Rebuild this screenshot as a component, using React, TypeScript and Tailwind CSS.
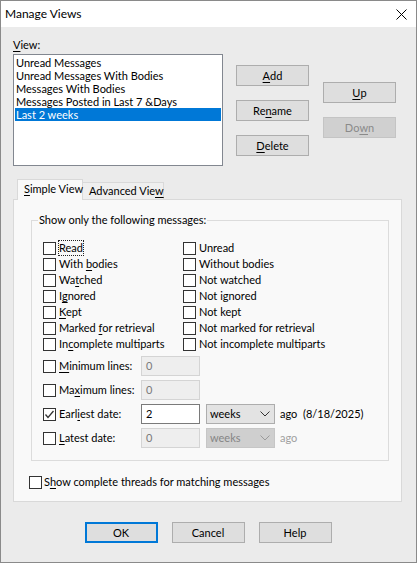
import React from "react";

const U = ({ children }: { children: React.ReactNode }) => (
  <span className="underline underline-offset-[2px] decoration-[1px]">{children}</span>
);

const Btn = ({
  children,
  disabled,
  primary,
}: {
  children: React.ReactNode;
  disabled?: boolean;
  primary?: boolean;
}) => (
  <div
    className={
      "w-[73px] h-[21px] flex items-center justify-center leading-[16px] whitespace-nowrap " +
      (primary
        ? "border-2 border-[#0078d7] bg-[#dedede] text-black"
        : disabled
        ? "border border-[#c4c4c4] bg-[#d0d0d0] text-[#8a8a8a]"
        : "border border-[#adadad] bg-[#dedede] text-black")
    }
  >
    {children}
  </div>
);

const Box = ({ checked }: { checked?: boolean }) => (
  <div className="w-[13px] h-[13px] shrink-0 border border-[#333333] bg-white flex items-center justify-center">
    {checked && (
      <svg width="11" height="11" viewBox="0 0 11 11">
        <polyline points="1.5,5.5 4,8.5 9.5,2" fill="none" stroke="#333" strokeWidth="1.3" />
      </svg>
    )}
  </div>
);

const Check = ({ label, focus }: { label: React.ReactNode; focus?: boolean }) => (
  <div className="h-[16px] flex items-center whitespace-nowrap">
    <Box />
    <span
      className={
        "ml-[3px] leading-[14px] " + (focus ? "outline outline-1 outline-dotted outline-[#222]" : "")
      }
    >
      {label}
    </span>
  </div>
);

const Chevron = ({ color }: { color: string }) => (
  <svg width="10" height="6" viewBox="0 0 10 6">
    <polyline points="0.5,0.5 5,5 9.5,0.5" fill="none" stroke={color} strokeWidth="1" />
  </svg>
);

const LineRow = ({
  label,
  value,
  enabled,
  checked,
  select,
  after,
}: {
  label: React.ReactNode;
  value: string;
  enabled?: boolean;
  checked?: boolean;
  select?: boolean;
  after?: React.ReactNode;
}) => (
  <div className="h-[20px] flex items-center whitespace-nowrap">
    <div className="w-[98px] flex items-center">
      <Box checked={checked} />
      <span className="ml-[3px] leading-[16px]">{label}</span>
    </div>
    <div
      className={
        "w-[59px] h-[20px] flex items-center pl-[4px] " +
        (enabled
          ? "bg-white border border-[#7a7a7a] text-black"
          : "bg-[#eeeeee] border border-[#d4d4d4] text-[#7a7a7a]")
      }
    >
      {value}
    </div>
    {select && (
      <div
        className={
          "ml-[6px] w-[69px] h-[20px] flex items-center justify-between pl-[3px] pr-[4px] " +
          (enabled
            ? "bg-[#e3e3e3] border border-[#adadad] text-black"
            : "bg-[#cfcfcf] border border-[#c6c6c6] text-[#858585]")
        }
      >
        <span>weeks</span>
        <Chevron color={enabled ? "#333" : "#9a9a9a"} />
      </div>
    )}
    {after}
  </div>
);

export default function App() {
  const left: React.ReactNode[] = [
    <>Read</>,
    <>
      With <U>b</U>odies
    </>,
    <>
      Wa<U>t</U>ched
    </>,
    <>
      I<U>g</U>nored
    </>,
    <>
      <U>K</U>ept
    </>,
    <>
      Marked <U>f</U>or retrieval
    </>,
    <>
      In<U>c</U>omplete multiparts
    </>,
  ];
  const right = [
    "Unread",
    "Without bodies",
    "Not watched",
    "Not ignored",
    "Not kept",
    "Not marked for retrieval",
    "Not incomplete multiparts",
  ];
  const items = [
    "Unread Messages",
    "Unread Messages With Bodies",
    "Messages With Bodies",
    "Messages Posted in Last 7 &Days",
    "Last 2 weeks",
  ];
  return (
    <div
      className="w-[417px] h-[563px] border border-[#8a8a8a] bg-[#ebebeb] flex flex-col text-[11px] text-black"
      style={{ fontFamily: 'Lato, "Noto Sans", sans-serif' }}
    >
      <div className="h-[26px] bg-white flex items-center justify-between pl-[4px] pr-[9px] shrink-0">
        <span className="leading-[16px] text-[12px]">Manage Views</span>
        <svg width="11" height="11" viewBox="0 0 11 11">
          <line x1="0.5" y1="0.5" x2="10.5" y2="10.5" stroke="#000" strokeWidth="1" />
          <line x1="10.5" y1="0.5" x2="0.5" y2="10.5" stroke="#000" strokeWidth="1" />
        </svg>
      </div>
      <div className="flex-1 px-[12px]">
        <div className="flex">
          <div className="mt-[10px] flex flex-col">
            <div className="h-[16px] leading-[16px] mb-[1px]">
              <U>V</U>iew:
            </div>
            <div className="w-[210px] h-[112px] border border-[#828790] bg-white p-[1px]">
              {items.map((t, i) => (
                <div
                  key={i}
                  className={
                    "h-[13px] leading-[13px] pl-[1px] whitespace-nowrap " +
                    (i === 4 ? "bg-[#0078d7] text-white" : "")
                  }
                >
                  {t}
                </div>
              ))}
            </div>
          </div>
          <div className="ml-[13px] mt-[38px] flex flex-col gap-[14px]">
            <Btn>
              <U>A</U>dd
            </Btn>
            <Btn>
              Re<U>n</U>ame
            </Btn>
            <Btn>
              <U>D</U>elete
            </Btn>
          </div>
          <div className="ml-[14px] mt-[55px] flex flex-col gap-[14px]">
            <Btn>
              <U>U</U>p
            </Btn>
            <Btn disabled>
              Do<U>w</U>n
            </Btn>
          </div>
        </div>

        <div className="mt-[13px] h-[20px] flex items-end pl-[4px] whitespace-nowrap">
          <div className="w-[66px] h-[21px] -mb-[1px] relative z-10 border border-b-0 border-[#d9d9d9] bg-[#f9f9f9] pl-[6px] pt-[1px] leading-[16px]">
            <U>S</U>imple View
          </div>
          <div className="w-[81px] h-[17px] border border-b-0 border-l-0 border-[#d9d9d9] bg-[#efefef] pl-[6px] leading-[16px]">
            Advanced Vie<U>w</U>
          </div>
        </div>
        <div className="w-[389px] h-[303px] border border-[#d9d9d9] bg-[#f9f9f9] flex flex-col">
          <div className="relative ml-[17px] mr-[12px] mt-[20px] border border-[#dcdcdc] pt-[19px] pb-[12px] pl-[11px]">
            <span className="absolute left-[6px] top-[-9px] px-[1px] bg-[#f9f9f9] leading-[16px] whitespace-nowrap">
              Show only the following messages:
            </span>
            <div className="flex">
              <div className="w-[140px] flex flex-col">
                {left.map((l, i) => (
                  <Check key={i} label={l} focus={i === 0} />
                ))}
              </div>
              <div className="flex flex-col">
                {right.map((l, i) => (
                  <Check key={i} label={l} />
                ))}
              </div>
            </div>
            <div className="mt-[4px] flex flex-col gap-[4px]">
              <LineRow
                label={
                  <>
                    <U>M</U>inimum lines:
                  </>
                }
                value="0"
              />
              <LineRow
                label={
                  <>
                    Ma<U>x</U>imum lines:
                  </>
                }
                value="0"
              />
              <LineRow
                label={
                  <>
                    Earl<U>i</U>est date:
                  </>
                }
                value="2"
                enabled
                checked
                select
                after={<span className="ml-[5px] whitespace-pre">ago  (8/18/2025)</span>}
              />
              <LineRow
                label={
                  <>
                    <U>L</U>atest date:
                  </>
                }
                value="0"
                select
                after={<span className="ml-[5px] text-[#a0a0a0]">ago</span>}
              />
            </div>
          </div>
          <div className="mt-[13px] ml-[15px] h-[16px] flex items-center whitespace-nowrap">
            <Box />
            <span className="ml-[2px] leading-[16px]">
              S<U>h</U>ow complete threads for matching messages
            </span>
          </div>
        </div>
        <div className="mt-[20px] flex justify-center gap-[14px] pr-[1px]">
          <Btn primary>OK</Btn>
          <Btn>Cancel</Btn>
          <Btn>Help</Btn>
        </div>
      </div>
    </div>
  );
}
